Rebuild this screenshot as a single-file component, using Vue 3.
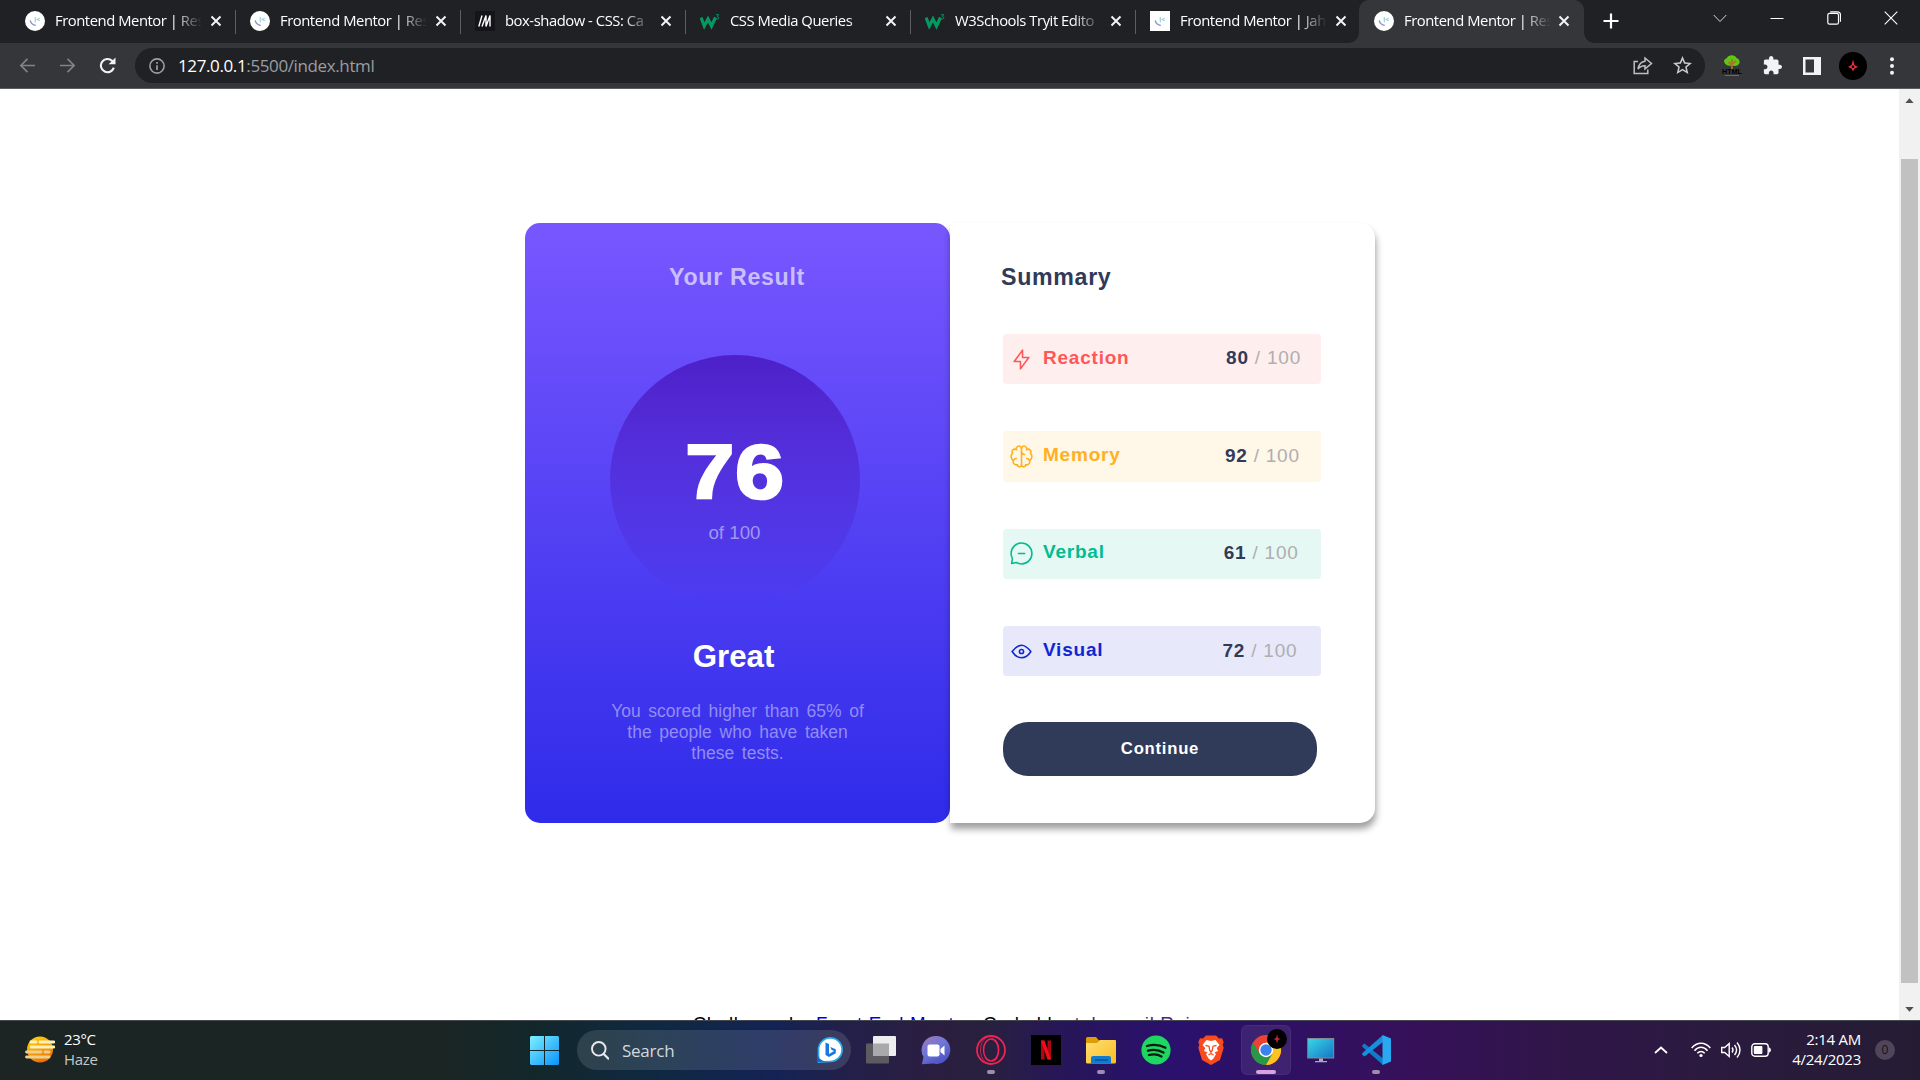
<script setup>
const tabs = [
  { title: 'Frontend Mentor | Res', icon: 'fm' },
  { title: 'Frontend Mentor | Res', icon: 'fm' },
  { title: 'box-shadow - CSS: Ca', icon: 'mdn' },
  { title: 'CSS Media Queries', icon: 'w3' },
  { title: 'W3Schools Tryit Edito', icon: 'w3' },
  { title: 'Frontend Mentor | Jah', icon: 'fmsq' },
  { title: 'Frontend Mentor | Res', icon: 'fm', active: true },
]

const scores = [
  {
    name: 'Reaction', value: 80, color: '#ff5757', bg: '#ffeeee',
    paths: ['M10.833 8.333V2.5l-6.666 9.167h5V17.5l6.666-9.167h-5Z'],
  },
  {
    name: 'Memory', value: 92, color: '#ffb01f', bg: '#fff7e8',
    paths: [
      'M5.833 11.667a2.5 2.5 0 1 0 .834 4.858',
      'M3.553 13.004a3.333 3.333 0 0 1-.728-5.53m.025-.067a2.083 2.083 0 0 1 2.983-2.824m.199.054A2.083 2.083 0 1 1 10 3.75v12.917a1.667 1.667 0 0 1-3.333 0M10 5.833a2.5 2.5 0 0 0 2.5 2.5m1.667 3.334a2.5 2.5 0 1 1-.834 4.858',
      'M16.447 13.004a3.334 3.334 0 0 0 .728-5.53m-.025-.067a2.083 2.083 0 0 0-2.983-2.824M10 3.75a2.085 2.085 0 0 1 2.538-2.033 2.084 2.084 0 0 1 1.43 2.92m-.635 12.03a1.667 1.667 0 0 1-3.333 0',
    ],
  },
  {
    name: 'Verbal', value: 61, color: '#00bd91', bg: '#e5f8f3',
    paths: [
      'M7.5 10h5',
      'M10 18.333A8.333 8.333 0 1 0 1.667 10c0 1.518.406 2.942 1.115 4.167l-.699 3.75 3.75-.699A8.295 8.295 0 0 0 10 18.333Z',
    ],
  },
  {
    name: 'Visual', value: 72, color: '#1125d4', bg: '#e7e8fa',
    paths: [
      'M10 11.667a1.667 1.667 0 1 0 0-3.334 1.667 1.667 0 0 0 0 3.334Z',
      'M17.5 10c-1.574 2.492-4.402 5-7.5 5s-5.926-2.508-7.5-5C4.416 7.632 6.66 5 10 5s5.584 2.632 7.5 5Z',
    ],
  },
]
</script>

<template>
  <div class="screen">
    <header class="tabstrip">
      <div v-for="(t, i) in tabs" :key="i" class="tab" :class="{ active: t.active, nosep: i === 5 }">
        <svg v-if="t.icon === 'fm' || t.icon === 'fmsq'" class="fav" viewBox="0 0 20 20">
          <circle v-if="t.icon === 'fm'" cx="10" cy="10" r="10" fill="#fff" />
          <rect v-else width="20" height="20" fill="#fff" />
          <path d="M5.2 9.4c.6 2.9 2.6 4.6 5.6 4.9" fill="none" stroke="#8d92c9" stroke-width="1.3" />
          <path d="M10.3 6v5.5M14.8 7.3l-2.5 1.2 2.5 1.2" fill="none" stroke="#9fd3dd" stroke-width="1.2" />
        </svg>
        <svg v-else-if="t.icon === 'mdn'" class="fav" viewBox="0 0 20 20">
          <rect width="20" height="20" fill="#15141a" />
          <path d="M3.8 15.500 7 4.500M7 15.500l4-11v11l4-11v11" fill="none" stroke="#fff" stroke-width="1.4" />
        </svg>
        <svg v-else class="fav" viewBox="0 0 20 20">
          <path d="M1 6.500 4.300 15 8 8l3.500 7 4-8.500" fill="none" stroke="#059862" stroke-width="3.2" />
          <path d="M16 3.700h2.700L17.300 5.600c2 0 2 2.600 0 2.600-.8 0-1.300-.4-1.500-.9" fill="none" stroke="#059862" stroke-width="1" />
        </svg>
        <span class="tab-title">{{ t.title }}</span>
        <svg class="tab-x" viewBox="0 0 12 12"><path d="M1.500 1.500l9 9M10.500 1.500l-9 9" stroke="#f1f3f4" stroke-width="2" /></svg>
      </div>
      <svg class="plus" viewBox="0 0 16 16"><path d="M8 .5v15M.5 8h15" stroke="#fff" stroke-width="2.2" /></svg>
      <div class="winctl">
        <svg viewBox="0 0 14 14"><path d="M.7 4 7 10.500l6.300-6.500" fill="none" stroke="#d8d9da" /></svg>
        <svg viewBox="0 0 14 14"><path d="M.5 7.500h13" stroke="#fff" /></svg>
        <svg viewBox="0 0 14 14" fill="none" stroke="#fff" stroke-width="1.2"><rect x=".8" y="2.3" width="10.7" height="10.9" rx="1.8" /><path d="M3.200.8h7.300a3 3 0 0 1 3 3v7" /></svg>
        <svg viewBox="0 0 14 14"><path d="M.7.7l12.600 12.600M13.300.7.7 13.300" stroke="#fff" stroke-width="1.1" /></svg>
      </div>
    </header>

    <div class="toolbar">
      <svg class="nav" viewBox="0 0 18 18"><path d="M17 9H2M9 2 2 9l7 7" fill="none" stroke="#828386" stroke-width="1.8" /></svg>
      <svg class="nav second" viewBox="0 0 18 18"><path d="M1 9h15M9 2l7 7-7 7" fill="none" stroke="#828386" stroke-width="1.8" /></svg>
      <svg class="nav third" viewBox="0 0 18 18"><path d="M15.700 11.200A7 7 0 1 1 13.800 4l1.700 1.800" fill="none" stroke="#f1f3f4" stroke-width="2.2" /><path d="M17.500.5v7.300h-7.300z" fill="#f1f3f4" /></svg>
      <div class="omnibox">
        <svg class="info" viewBox="0 0 16 16"><circle cx="8" cy="8" r="7.1" fill="none" stroke="#9aa0a6" stroke-width="1.6" /><path d="M8 7.200V12M8 4v1.700" stroke="#9aa0a6" stroke-width="1.7" /></svg>
        <span class="url">127.0.0.1<i>:5500/index.html</i></span>
        <svg class="share" viewBox="0 0 20 18"><path d="M5 5H1.200v12h13.600v-4" fill="none" stroke="#bcbec1" stroke-width="1.5" /><path d="M12 1.500 18.500 7 12 12.300V9.200c-3.200 0-5.300.9-7 3.300.7-4 3-7.300 7-7.800z" fill="none" stroke="#bcbec1" stroke-width="1.5" /></svg>
        <svg class="star" viewBox="2 2 20 20"><path fill="#c8cacc" d="M22 9.240l-7.190-.62L12 2 9.190 8.630 2 9.240l5.460 4.730L5.820 21 12 17.270 18.180 21l-1.630-7.030L22 9.240zM12 15.400l-3.760 2.270 1-4.280-3.320-2.880 4.380-.38L12 6.100l1.710 4.040 4.380.38-3.320 2.880 1 4.280L12 15.400z" /></svg>
      </div>
      <div class="exts">
        <svg class="tree" viewBox="0 0 20 21">
          <path d="M2 6.500C2 4 4 3.500 5 3c1-3.300 8-3.700 9.500 0 3 .6 4.500 5 1.500 7-2 1.500-4 1-6 .5-3 1-7 0-8-4z" fill="#62c414" />
          <path d="M10 4v11M10 10 6.500 7M10 9l4-3" stroke="#a8742a" stroke-width="1.8" fill="none" />
          <text x="10" y="19.3" text-anchor="middle" textLength="20" lengthAdjust="spacingAndGlyphs">HTML</text>
          <path d="M3 20.500h14" stroke="#77787a" stroke-width=".8" />
        </svg>
        <svg class="puzzle" viewBox="1 1 22 22"><path fill="#f1f3f4" d="M20.500 11H19V7c0-1.100-.9-2-2-2h-4V3.500C13 2.120 11.880 1 10.500 1S8 2.120 8 3.500V5H4c-1.100 0-1.990.9-1.990 2v3.800H3.500c1.490 0 2.700 1.210 2.700 2.700s-1.210 2.700-2.700 2.700H2V20c0 1.100.9 2 2 2h3.800v-1.500c0-1.490 1.210-2.700 2.700-2.700 1.490 0 2.700 1.210 2.700 2.700V22H17c1.100 0 2-.9 2-2v-4h1.500c1.380 0 2.500-1.120 2.500-2.500S21.880 11 20.500 11z" /></svg>
        <svg class="panel" viewBox="0 0 18 18"><path fill="#f1f3f4" fill-rule="evenodd" d="M0 0h18v18H0zM2.500 2.500v13H11v-13z" /></svg>
        <svg class="ava" viewBox="0 0 28 28"><circle cx="14" cy="14" r="14" fill="#000" /><path d="M14 7.500l1.500 5.500 3.500 2-3.500 1.500L14 19.500l-1.500-3L9 15l3.500-2z" fill="#f02b3e" /><circle cx="14" cy="14.8" r="1.3" fill="#000" /></svg>
        <svg class="dots" viewBox="0 0 4 18" fill="#f1f3f4"><circle cx="2" cy="2.3" r="2" /><circle cx="2" cy="9" r="2" /><circle cx="2" cy="15.7" r="2" /></svg>
      </div>
    </div>

    <div class="viewport">
      <main class="page">
        <div class="cards">
          <section class="result">
            <h2>Your Result</h2>
            <div class="circle">
              <strong>76</strong>
              <span>of 100</span>
            </div>
            <h3>Great</h3>
            <p>You scored higher than 65% of<br />the people who have taken<br />these tests.</p>
          </section>
          <section class="summary">
            <h2>Summary</h2>
            <div class="rows">
              <div v-for="(s, i) in scores" :key="s.name" class="row" :style="{ background: s.bg, paddingRight: 20 + i * 1.2 + 'px' }">
                <svg viewBox="0 0 20 20" fill="none" :stroke="s.color" stroke-width="1.25" stroke-linecap="round" stroke-linejoin="round">
                  <path v-for="p in s.paths" :key="p" :d="p" />
                </svg>
                <b :style="{ color: s.color }">{{ s.name }}</b>
                <span class="score" :class="{ low: i > 0 }"><b>{{ s.value }}</b> / 100</span>
              </div>
            </div>
            <button>Continue</button>
          </section>
        </div>
        <footer>Challenge by <a>Front End Mentor</a>. Coded by <a class="seen">takasanil Rai</a>.</footer>
      </main>
      <div class="scroll">
        <svg viewBox="0 0 10 6"><path d="M5 .3 10 6H0z" fill="#505050" /></svg>
        <div class="thumb"></div>
        <svg viewBox="0 0 10 6"><path d="M5 5.700 10 0H0z" fill="#505050" /></svg>
      </div>
    </div>

    <footer class="taskbar">
      <div class="weather">
        <svg viewBox="0 0 30 28">
          <defs><linearGradient id="sun" x1=".3" y1="0" x2=".7" y2="1"><stop offset="0" stop-color="#ffce0a" /><stop offset="1" stop-color="#ee6a08" /></linearGradient></defs>
          <circle cx="15" cy="13.5" r="13" fill="url(#sun)" />
          <path d="M6 6h5M15 6h14M6 11h23" stroke="#fdf0bd" stroke-width="2.8" stroke-linecap="round" />
          <path d="M1.500 16H16M20 16h4M1.500 21H24" stroke="#ecd08d" stroke-width="2.8" stroke-linecap="round" />
        </svg>
        <div><span>23°C</span><span class="dim">Haze</span></div>
      </div>

      <div class="dock">
        <svg class="win" viewBox="0 0 29 29">
          <defs><linearGradient id="wn" x1="0" y1="0" x2="1" y2="1"><stop offset="0" stop-color="#7df0ff" /><stop offset="1" stop-color="#0a93fa" /></linearGradient></defs>
          <path d="M1 0h13v14H0V1zM15 0h13l1 1v13H15zM0 15h14v14H1l-1-1zM15 15h14v13l-1 1H15z" fill="url(#wn)" />
        </svg>
        <div class="search">
          <svg class="glass" viewBox="0 0 18 19"><circle cx="7.8" cy="7.8" r="6.8" fill="none" stroke="#e6eaec" stroke-width="1.9" /><path d="M12.700 12.900l4.500 4.700" stroke="#e6eaec" stroke-width="2.2" stroke-linecap="round" /></svg>
          <span>Search</span>
          <svg class="bing" viewBox="0 0 26 26">
            <path d="M1.500 25V13A11.800 11.800 0 1 1 13 24.500z" fill="#fff" stroke="#29a9ee" stroke-width="1.7" />
            <path d="M1 25v-6c2 4 6 6 12 5.500z" fill="#1767cf" />
            <path d="M8.500 5.500 12 7v10l5-3-2.500-1.300L13.300 10l5.500 2.200v4L12 20l-3.500-2z" fill="#1877e0" />
          </svg>
        </div>
        <div class="app"><svg viewBox="0 0 30 30"><rect y="8.5" width="23" height="20" rx="1" fill="#5e5b60" /><rect x="7" y="1" width="23" height="20" rx="1" fill="#ededed" /><path d="M7 8.500h16V21H7z" fill="#a9a8aa" /></svg></div>
        <div class="app"><svg viewBox="0 0 30 30">
          <defs><linearGradient id="ch" x1="0" y1="0" x2=".6" y2="1"><stop offset="0" stop-color="#a07ab6" /><stop offset=".5" stop-color="#6f76d8" /><stop offset="1" stop-color="#4c53c4" /></linearGradient></defs>
          <path d="M15 1a14 14 0 1 1-3 27.600L.8 29.200 2.500 22A14 14 0 0 1 15 1z" fill="url(#ch)" /><rect x="6.5" y="9.5" width="12" height="12" rx="2" fill="#fff" /><path d="M19.500 14l4-3.500v10l-4-3.500z" fill="#fff" /></svg></div>
        <div class="app"><svg viewBox="0 0 30 30" fill="none" stroke="#ee2453"><circle cx="15" cy="15" r="14" stroke-width="1.8" /><ellipse cx="15" cy="15" rx="7.5" ry="11" stroke-width="1.5" /><path d="M16 4c9 0 9 22 0 22" stroke-width="1.1" /><path d="M12 2C2 5 2 25 12 28" stroke-width=".8" /></svg><i class="dot"></i></div>
        <div class="app"><svg viewBox="0 0 30 30"><path d="M0 0h30v30H0z" fill="#000" /><path d="M10 5.500h3.500V24.500H10zM16.500 5.500H20V24.500h-3.500z" fill="#b1060f" /><path d="M10 5.500h3.500L20 24.500h-3.500z" fill="#f0101c" /></svg></div>
        <div class="app"><svg viewBox="0 0 30 30">
          <defs><linearGradient id="fo" x1="0" y1="0" x2="1" y2="1"><stop offset="0" stop-color="#ffdf72" /><stop offset="1" stop-color="#f9bd24" /></linearGradient></defs>
          <path d="M0 3.500A1.500 1.500 0 0 1 1.500 2H10l3 3.500H28V20H0z" fill="#dd9c08" /><path d="M0 8h11l3-3h15a1 1 0 0 1 1 1v21a1.500 1.500 0 0 1-1.500 1.500h-27A1.500 1.500 0 0 1 0 27z" fill="url(#fo)" /><path d="M5 28.500V23a2 2 0 0 1 2-2h16a2 2 0 0 1 2 2v5.500z" fill="#117bd0" /><path d="M9 25h13" stroke="#064c93" stroke-width="1.3" /></svg><i class="dot"></i></div>
        <div class="app"><svg viewBox="0 0 30 30"><circle cx="15" cy="15" r="14.6" fill="#1ed760" /><path d="M6 11c6-1.800 13-1.200 18.500 1.800M7 15.700c5-1.500 11-.8 15.500 1.900M8 20c4.500-1.200 9-.7 12.500 1.500" fill="none" stroke="#0c1a10" stroke-width="2.3" stroke-linecap="round" /></svg></div>
        <div class="app"><svg viewBox="0 0 30 30"><path d="M10 .5h10l3 3 3-.3 1.700 4-1 2.500 1 3L24 25l-9 5-9-5L2.300 12.700l1-3-1-2.500L4 3.200l3 .3z" fill="#fb4a1b" /><path d="M10.500 5 15 6l4.500-1L23.500 10l-2.700 3 1.200 3-3.500 1.500 1.500 1.500-2.500 4.500-2.500 2-2.500-2L10 19l1.500-1.500L8 16l1.200-3-2.700-3z" fill="#fff" /><path d="M9.500 10.500l3.500.7.700 4 1.300 2 1.300-2 .7-4 3.500-.7M12.500 20l2.500-1.500 2.500 1.500" fill="none" stroke="#fb4a1b" stroke-width="1.3" /></svg></div>
        <div class="app current"><svg viewBox="0 0 30 30"><circle cx="15" cy="15" r="15" fill="#ea4335" /><path d="M2 7.500A15 15 0 0 0 15 30l6.500-11.250L15 15l-6.500 3.750z" fill="#279847" /><path d="M15 30A15 15 0 0 0 28 7.500H15l6.500 11.250z" fill="#fcc31e" /><circle cx="15" cy="15" r="7.2" fill="#fff" /><circle cx="15" cy="15" r="5.7" fill="#3b82ee" /></svg>
          <svg class="badge" viewBox="0 0 20 20"><circle cx="10" cy="10" r="10" fill="#000" /><path d="M10 5.500l1 3.500 2.500 1-2.500 1-1 3.500L9 11l-2.500-1L9 9z" fill="#c3253b" /></svg>
          <i class="dot wide"></i></div>
        <div class="app"><svg viewBox="0 0 30 30">
          <defs><linearGradient id="mo" x1="0" y1="0" x2="1" y2="1"><stop offset="0" stop-color="#38d6e6" /><stop offset="1" stop-color="#1577c4" /></linearGradient></defs>
          <rect x="1.2" y="3" width="27" height="20.5" fill="#7d8d98" /><rect x="2.2" y="4" width="25" height="18.5" fill="url(#mo)" /><path d="M13 23.500h4V26h4v1.200H9V26h4z" fill="#a9acb2" /></svg></div>
        <div class="app"><svg viewBox="0 0 30 30"><path d="M1 10.500 3.500 8.500 22 23.500V30L1.500 12z" fill="#0e7cc8" /><path d="M1 19.500 3.500 21.500 22 7V0L1.500 18z" fill="#1590dc" /><path d="M21.500 0 30 3.500v23L21.500 30z" fill="#2aa9f3" /></svg><i class="dot"></i></div>
      </div>

      <div class="tray">
        <svg class="up" viewBox="0 0 14 8"><path d="M1 7l6-5.500L13 7" fill="none" stroke="#fff" stroke-width="1.8" /></svg>
        <svg class="wifi" viewBox="0 0 20 16" fill="none" stroke="#fff" stroke-width="1.5"><path d="M.7 6C6-.4 14-.4 19.300 6M3.500 8.700c3.700-4.500 9.300-4.500 13 0M6.300 11.300c2.200-2.500 5.200-2.500 7.400 0" /><circle cx="10" cy="13.5" r="1.6" fill="#fff" stroke="none" /></svg>
        <svg class="vol" viewBox="0 0 20 18" fill="none" stroke="#fff" stroke-width="1.4"><path d="M.7 6.500v5h3l4.500 4V2.500l-4.500 4z" /><path d="M11 6.500c1.200 1.500 1.200 3.500 0 5M13.500 4c2.500 3 2.500 7 0 10M16 1.500c4 4.500 4 10.500 0 15" /></svg>
        <svg class="bat" viewBox="0 0 20 14"><rect x=".8" y=".8" width="16.4" height="12.4" rx="3" fill="none" stroke="#fff" stroke-width="1.4" /><rect x="2.8" y="3" width="8.6" height="8" rx="1" fill="#fff" /><path d="M18 4.500c2.600.5 2.600 4.500 0 5z" fill="#fff" /></svg>
        <div class="clock"><span>2:14 AM</span><span>4/24/2023</span></div>
        <div class="count">0</div>
      </div>
    </footer>
  </div>
</template>

<style>
body { margin: 0; overflow: hidden; }
</style>

<style scoped>
* { box-sizing: border-box; }
svg { display: block; flex: none; }
.screen {
  width: 1920px; height: 1080px; display: flex; flex-direction: column; overflow: hidden;
  background: #fff; font-family: "Open Sans", "Noto Sans", sans-serif;
}

/* browser chrome */
.tabstrip { height: 43px; flex: none; display: flex; align-items: stretch; background: #202124; padding-left: 10px; }
.tab { width: 225px; padding: 0 13px 1px 15px; display: flex; align-items: center; position: relative; }
.tab:not(.active):not(.nosep)::after { content: ""; position: absolute; right: -1px; top: 10px; width: 1px; height: 24px; background: #5d5e61; }
.tab.active { margin-left: -1px; background: #35363a; border-radius: 10px 10px 0 0; }
.tab.active::before, .tab.active::after { content: ""; position: absolute; bottom: 0; width: 10px; height: 10px; }
.tab.active::before { left: -10px; background: radial-gradient(circle at 0 0, transparent 9.5px, #35363a 10px); }
.tab.active::after { right: -10px; background: radial-gradient(circle at 100% 0, transparent 9.5px, #35363a 10px); }
.fav { width: 20px; height: 20px; }
.tab-title {
  width: 147px; margin: 0 0 2px 10px; white-space: nowrap; font-size: 14.8px; letter-spacing: -.45px; color: #fff;
  -webkit-mask-image: linear-gradient(90deg, #000 118px, transparent 147px); mask-image: linear-gradient(90deg, #000 118px, transparent 147px);
}
.tab-x { width: 12px; height: 12px; margin-left: 8px; }
.tab.active .tab-x { margin-left: 7px; }
.plus { width: 16px; height: 16px; margin: 13px 0 0 19px; }
.winctl { margin: 11px 22px 0 auto; display: flex; gap: 43px; }
.winctl svg { width: 14px; height: 14px; }
.toolbar { height: 46px; flex: none; display: flex; align-items: center; background: #35363a; border-bottom: 1px solid #5b5c5f; padding-left: 19px; }
.nav { width: 17px; height: 17px; }
.nav.second { margin-left: 23px; }
.nav.third { margin-left: 23px; }
.omnibox { width: 1570px; height: 35px; margin-left: 19px; border-radius: 18px; background: #202124; display: flex; align-items: center; padding: 0 13px 0 14px; }
.info { width: 16px; height: 16px; }
.url { margin-left: 13px; font-size: 17px; letter-spacing: -.38px; color: #fff; white-space: nowrap; }
.url i { font-style: normal; color: #9a9da1; }
.share { width: 20px; height: 19px; margin-left: auto; }
.star { width: 19px; height: 19px; margin-left: 20px; }
.exts { display: flex; align-items: center; padding-left: 17px; }
.tree { width: 20px; height: 21px; }
.tree text { font: 900 7px "Liberation Sans", sans-serif; fill: #000; }
.puzzle { width: 19px; height: 19px; margin-left: 21px; }
.panel { width: 18px; height: 18px; margin-left: 21px; }
.ava { width: 28px; height: 28px; margin-left: 18px; }
.dots { width: 4px; height: 18px; margin-left: 23px; }

/* page */
.viewport { height: 931px; flex: none; display: flex; }
.page { width: 1899px; height: 931px; overflow: hidden; padding-top: 134px; display: flex; flex-direction: column; align-items: center; font-family: "Liberation Sans", Arial, sans-serif; }
.cards { display: flex; width: 850px; height: 600px; flex: none; margin-left: 1px; }
.result, .summary { width: 425px; height: 600px; border-radius: 15px; }
.result { background: linear-gradient(#7857ff, #2f2be9); display: flex; flex-direction: column; align-items: center; text-align: center; }
h2 { margin: 0; font-size: 23.2px; line-height: 26px; letter-spacing: .68px; }
.result h2 { margin: 41px 1px 0 0; color: #c9bfff; }
.circle { width: 250px; height: 250px; margin: 65px 5px 0 0; border-radius: 50%; background: linear-gradient(#4d20c9, rgba(37, 33, 201, 0)); display: flex; flex-direction: column; align-items: center; }
.circle strong { margin-top: 73px; font-size: 76px; line-height: 88px; letter-spacing: 1px; color: #fff; -webkit-text-stroke: 2.7px #fff; transform: scaleX(1.15); }
.circle span { margin: 6px 1px 0 0; font-size: 18.75px; line-height: 22px; color: #a096f0; }
h3 { margin: 34px 8px 0 0; font-size: 31.25px; line-height: 36px; color: #fff; }
.result p { margin: 26px 0 0; font-size: 17.5px; line-height: 21px; word-spacing: 2.8px; color: #918df3; white-space: nowrap; }
.summary { border-radius: 0 15px 15px 0; box-shadow: 1px 6px 7px rgba(0, 0, 0, .38); padding: 41px 0 0 51px; background: #fff; color: #303b5a; }
.rows { margin: 44px 0 0 2px; display: flex; flex-direction: column; gap: 47px; }
.row { width: 318px; height: 50.3px; border-radius: 4px; display: flex; align-items: center; padding-left: 6px; font-size: 19px; letter-spacing: .78px; }
.row svg { width: 25px; height: 25px; }
.row > b { margin: 0 auto 3px 9px; }
.score { color: #aeaeb0; margin-bottom: 3px; white-space: pre; }
.score.low { margin-bottom: 1px; }
.score b { color: #303b5a; }
button { display: block; width: 314px; height: 54px; margin: 46px 0 0 2px; padding: 0; border: 0; border-radius: 25px; background: #303b5a; color: #fff; font: bold 16.7px "Liberation Sans", Arial, sans-serif; letter-spacing: .75px; }
.page footer { margin: 190px 10px 0 0; font-size: 18.75px; line-height: 22px; letter-spacing: .66px; color: #000; white-space: nowrap; }
.page footer a { color: #00e; text-decoration: none; }
.page footer a.seen { color: #551a8b; }
.scroll { width: 21px; background: #f1f1f1; display: flex; flex-direction: column; align-items: center; padding: 9px 0 8px; }
.scroll svg { width: 9px; height: 5px; }
.thumb { width: 17px; height: 824px; margin: 56px 0 auto; background: #c1c1c1; }

/* taskbar */
.taskbar {
  height: 60px; flex: none; display: flex; align-items: center; color: #fff; border-top: 1px solid #45494f; padding-bottom: 1px;
  background: linear-gradient(90deg, #1c2523 0, #1b2524 440px, #13272a 530px, #0f2941 650px, #132355 770px, #232049 850px, #2b1e40 940px, #28203f 990px, #271658 1060px, #2a116d 1170px, #2d1065 1260px, #36105b 1400px, #30154a 1540px, #2a1b3d 1740px, #251c33);
}
.weather { display: flex; align-items: center; width: 505px; padding-left: 25px; font-size: 15px; line-height: 20px; letter-spacing: -.35px; }
.weather > div { padding-bottom: 2px; }
.weather svg { width: 30px; height: 28px; margin-right: 9px; }
.weather span, .clock span { display: block; }
.dim { color: #c5c8c7; }
.dock { display: flex; align-items: center; margin-left: 25px; }
.win { width: 29px; height: 29px; margin-right: 18px; }
.search { width: 274px; height: 40px; border-radius: 20px; background: rgba(255, 255, 255, .12); display: flex; align-items: center; padding: 0 8px 0 14px; margin-right: 5px; }
.glass { width: 18px; height: 19px; }
.search span { margin-left: 13px; font-size: 17px; letter-spacing: -.25px; color: #d3d9dd; }
.bing { width: 26px; height: 26px; margin-left: auto; }
.app { width: 50px; height: 50px; margin-right: 5px; border-radius: 6px; display: flex; align-items: center; justify-content: center; position: relative; }
.app svg { width: 30px; height: 30px; }
.current { background: rgba(255, 255, 255, .08); box-shadow: inset 0 0 0 1px rgba(255, 255, 255, .05); }
.app .badge { position: absolute; width: 20px; height: 20px; left: 26px; top: 4px; }
.dot { position: absolute; left: 21px; bottom: 1px; width: 8px; height: 4px; border-radius: 2px; background: #9c8fae; }
.dot.wide { left: 15px; width: 20px; background: #d9a0e2; }
.tray { margin-left: auto; display: flex; align-items: center; padding-right: 25px; }
.up { width: 14px; height: 8px; margin-right: 23px; }
.wifi { width: 20px; height: 16px; margin-right: 10px; }
.vol { width: 20px; height: 18px; margin-right: 10px; }
.bat { width: 20px; height: 14px; margin-right: 20px; }
.clock { width: 70px; text-align: right; font-size: 15px; line-height: 20px; letter-spacing: -.25px; white-space: nowrap; margin-right: 14px; padding-bottom: 3px; }
.count { width: 20px; height: 20px; border-radius: 50%; background: #50465a; color: #17121f; font-size: 12px; line-height: 20px; text-align: center; }
</style>
